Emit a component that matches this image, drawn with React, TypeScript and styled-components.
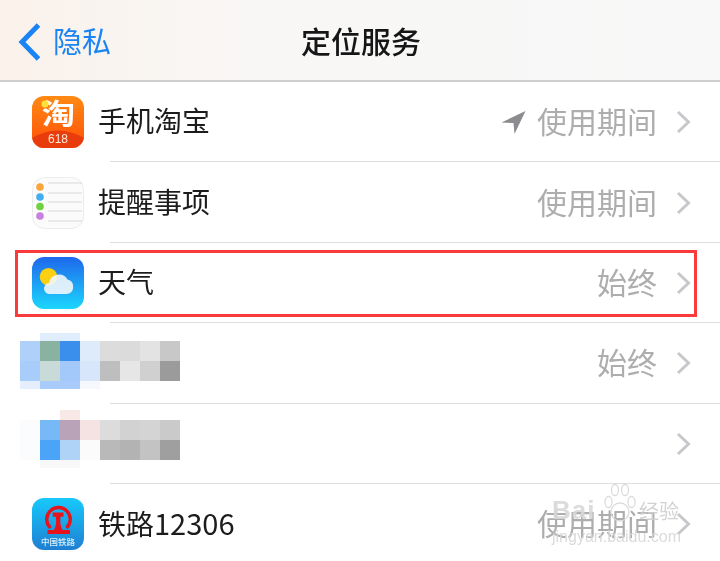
import React from 'react';
import styled, { createGlobalStyle } from 'styled-components';

const GlobalStyle = createGlobalStyle`
  html, body {
    margin: 0;
    padding: 0;
    background: #fff;
  }
  body {
    font-family: "Noto Sans CJK SC", "Liberation Sans", sans-serif;
  }
`;

const SPage = styled.div`
  position: relative;
  width: 720px;
  height: 561px;
  overflow: hidden;
  background: #fff;
  filter: blur(0.45px);
`;

const SNavBar = styled.header`
  box-sizing: border-box;
  display: flex;
  align-items: center;
  height: 82px;
  padding-left: 18px;
  background: linear-gradient(90deg, #fbf1ea 0%, #f9f4f0 15%, #f8f7f6 40%, #f8f8f8 100%);
  border-bottom: 2px solid #cfcfcf;
`;

const SBack = styled.div`
  display: flex;
  align-items: center;
  gap: 11px;
  width: 283px;
`;

const SBackIcon = styled.svg`
  display: block;
  margin-top: 3px;
`;

const SBackLabel = styled.span`
  font-size: 29px;
  line-height: 40px;
  color: #1a84f5;
`;

const STitle = styled.h1`
  margin: 0;
  font-size: 30px;
  line-height: 40px;
  font-weight: 500;
  color: #161616;
`;

const SList = styled.div`
  display: flex;
  flex-direction: column;
`;

const SRow = styled.div`
  position: relative;
  box-sizing: border-box;
  flex: none;
  display: flex;
  align-items: center;
  height: 80.4px;
  padding: 0 29px 0 32px;

  &:not(:last-child)::after {
    content: '';
    position: absolute;
    left: 110px;
    right: 0;
    bottom: 0;
    height: 1px;
    background: #dedede;
  }
`;

const SMosaicRow = styled(SRow)`
  padding-left: 20px;
`;

const SIconBox = styled.div`
  flex: none;
  width: 52px;
  height: 52px;
  margin-right: 14px;
  svg {
    display: block;
  }
`;

const SLabel = styled.span`
  font-size: 28px;
  line-height: 40px;
  margin-bottom: 4px;
  color: #1c1c1c;
`;

const SDigits = styled.span`
  font-size: 29px;
`;

const SRight = styled.div`
  margin-left: auto;
  display: flex;
  align-items: center;
`;

const SValue = styled.span`
  font-size: 30px;
  line-height: 40px;
  margin-bottom: 4px;
  color: #adadad;
  margin-right: 19px;
`;

const SArrowIcon = styled.svg`
  display: block;
  margin-right: 11px;
`;

const SChevron = styled.svg`
  display: block;
`;

const SMosaic = styled.div<{ $rows: string; $lift: number }>`
  display: grid;
  grid-template-columns: repeat(8, 20px);
  grid-template-rows: ${(props) => props.$rows};
  margin-bottom: ${(props) => props.$lift}px;
`;

const SCell = styled.div<{ $color: string }>`
  background: ${(props) => props.$color};
`;

const SHighlight = styled.div`
  position: absolute;
  left: 15px;
  top: 250px;
  width: 682px;
  height: 67px;
  box-sizing: border-box;
  border: 3px solid #fb3a3c;
`;

const SWatermark = styled.div`
  position: absolute;
  left: 552px;
  top: 483px;
  width: 130px;
  display: flex;
  flex-direction: column;
  color: rgba(215, 215, 215, 0.9);
`;

const SWatermarkTop = styled.div`
  display: flex;
  align-items: flex-end;
  height: 46px;
`;

const SWatermarkPaw = styled.svg`
  display: block;
  align-self: flex-start;
`;

const SWatermarkBrand = styled.span`
  width: 52px;
  font-family: "Liberation Sans", sans-serif;
  font-size: 26px;
  line-height: 30px;
  font-weight: 700;
  letter-spacing: 1px;
  margin-bottom: 4px;
`;

const SWatermarkCn = styled.span`
  margin-left: 3px;
  font-size: 20px;
  line-height: 24px;
  margin-bottom: 6px;
  color: rgba(205, 205, 205, 0.9);
`;

const SWatermarkUrl = styled.span`
  font-family: "Liberation Sans", sans-serif;
  font-size: 16px;
  line-height: 16px;
  white-space: nowrap;
`;

const Chevron = () => (
  <SChevron width="15" height="24" viewBox="0 0 15 24">
    <path d="M2 2 L12.5 12 L2 22" fill="none" stroke="#c8c8cc" strokeWidth="3" />
  </SChevron>
);

const LocationArrow = () => (
  <SArrowIcon width="25" height="25" viewBox="0 0 25 25">
    <path d="M24.5 1 L13.5 24 L12.5 13 L0.5 12.5 Z" fill="#8b8b90" />
  </SArrowIcon>
);

const BackChevron = () => (
  <SBackIcon width="24" height="38" viewBox="0 0 24 38">
    <path d="M20.5 2 L4 19 L20.5 36" fill="none" stroke="#1a84f5" strokeWidth="5" />
  </SBackIcon>
);

const TaobaoIcon = () => (
  <svg width="52" height="52" viewBox="0 0 52 52">
    <defs>
      <linearGradient id="tb" x1="0" y1="0" x2="0" y2="1">
        <stop offset="0" stopColor="#ff8a14" />
        <stop offset="1" stopColor="#ff4f06" />
      </linearGradient>
    </defs>
    <rect width="52" height="52" rx="12" fill="url(#tb)" />
    <path d="M0 42 Q26 27 52 42 V40 A12 12 0 0 1 40 52 H12 A12 12 0 0 1 0 40 Z" fill="#e83c0c" />
    <text transform="translate(26.5 29) scale(1.15 1)" textAnchor="middle" fontSize="29" fontWeight="700" fill="#fff" fontFamily="Noto Sans CJK SC">淘</text>
    <circle cx="13" cy="8" r="3.5" fill="#ffe13a" />
    <text x="26" y="46.5" textAnchor="middle" fontSize="12" fill="#ffe8d8" fontFamily="Liberation Sans">618</text>
  </svg>
);

const RemindersIcon = () => (
  <svg width="52" height="52" viewBox="0 0 52 52">
    <rect x="0.5" y="0.5" width="51" height="51" rx="12" fill="#fbfbfb" stroke="#ececec" />
    {[6, 16, 25, 34, 44].map((y) => (
      <path key={y} d="M16 0 H50" transform={`translate(0 ${y})`} stroke="#d8d8d8" strokeWidth="1" />
    ))}
    <circle cx="8" cy="10" r="3.8" fill="#f9a53a" />
    <circle cx="8" cy="20" r="3.8" fill="#42aef2" />
    <circle cx="8" cy="29.5" r="3.8" fill="#6fd13e" />
    <circle cx="8" cy="39" r="3.8" fill="#c77fe0" />
  </svg>
);

const WeatherIcon = () => (
  <svg width="52" height="52" viewBox="0 0 52 52">
    <defs>
      <linearGradient id="wx" x1="0" y1="0" x2="0" y2="1">
        <stop offset="0" stopColor="#1f68ec" />
        <stop offset="1" stopColor="#1bd6fd" />
      </linearGradient>
    </defs>
    <rect width="52" height="52" rx="12" fill="url(#wx)" />
    <circle cx="16.5" cy="19.7" r="8.8" fill="#fbcf12" />
    <path
      d="M18 37 A5.5 5.5 0 0 1 17 26 A10 10 0 0 1 35.5 22.5 A7.4 7.4 0 0 1 35 37 Z"
      fill="#f2f6fb"
      fillOpacity="0.9"
    />
  </svg>
);

const RailwayIcon = () => (
  <svg width="52" height="52" viewBox="0 0 52 52">
    <defs>
      <linearGradient id="rw" x1="0" y1="0" x2="0" y2="1">
        <stop offset="0" stopColor="#17c9fb" />
        <stop offset="1" stopColor="#1f7fd2" />
      </linearGradient>
    </defs>
    <rect width="52" height="52" rx="12" fill="url(#rw)" />
    <path d="M18.5 30 A11.8 11.8 0 1 1 34.5 30" fill="none" stroke="#e8141c" strokeWidth="3.4" />
    <path d="M20.7 14.5 H31.5 V18.7 H28.5 Q27.5 27 30.5 32 H38 V36 H15.5 V32 H22 Q25 27 23.8 18.7 H20.7 Z" fill="#e8141c" />
    <text x="26" y="46.5" textAnchor="middle" fontSize="8.5" fontWeight="500" fill="#d4eefc" fontFamily="Noto Sans CJK SC">中国铁路</text>
  </svg>
);

const MOSAIC_ONE = [
  '#ffffff', '#e0edfc', '#e0edfc', '#ffffff', '#ffffff', '#ffffff', '#ffffff', '#ffffff',
  '#aed0f9', '#89b2a1', '#3a8fec', '#deebfb', '#dcdcdc', '#dbdbdb', '#e3e3e3', '#c8c8c8',
  '#a9cdfa', '#c9dbd9', '#a3c9fa', '#d7e6fa', '#bebebe', '#e6e6e6', '#d0d0d0', '#9b9b9b',
  '#e4eefc', '#a8cbfb', '#a8cbfb', '#f5f9fe', '#ffffff', '#ffffff', '#ffffff', '#ffffff',
];

const MOSAIC_TWO = [
  '#ffffff', '#ffffff', '#f8e8e6', '#ffffff', '#ffffff', '#ffffff', '#ffffff', '#ffffff',
  '#fbfcfd', '#77b8f6', '#b9a3b8', '#f5e2e3', '#dcdcdc', '#d2d2d2', '#d4d4d4', '#cacaca',
  '#fbfcfd', '#4ba4f8', '#aed3f6', '#fbfbfb', '#b9b9b9', '#b3b3b3', '#c3c3c3', '#9f9f9f',
  '#ffffff', '#f8f8f8', '#f8f8f8', '#ffffff', '#ffffff', '#ffffff', '#ffffff', '#ffffff',
];

const Mosaic: React.FC<{ cells: string[]; rows: string; lift: number }> = ({ cells, rows, lift }) => (
  <SMosaic $rows={rows} $lift={lift}>
    {cells.map((color, index) => (
      <SCell key={index} $color={color} />
    ))}
  </SMosaic>
);

interface RowProps {
  icon: React.ReactNode;
  label: React.ReactNode;
  value?: string;
  located?: boolean;
}

const AppRow: React.FC<RowProps> = ({ icon, label, value, located }) => (
  <SRow>
    <SIconBox>{icon}</SIconBox>
    <SLabel>{label}</SLabel>
    <SRight>
      {located ? <LocationArrow /> : null}
      <SValue>{value}</SValue>
      <Chevron />
    </SRight>
  </SRow>
);

const App: React.FC = () => (
  <SPage>
    <GlobalStyle />
    <SNavBar>
      <SBack>
        <BackChevron />
        <SBackLabel>隐私</SBackLabel>
      </SBack>
      <STitle>定位服务</STitle>
    </SNavBar>
    <SList>
      <AppRow icon={<TaobaoIcon />} label="手机淘宝" value="使用期间" located />
      <AppRow icon={<RemindersIcon />} label="提醒事项" value="使用期间" />
      <AppRow icon={<WeatherIcon />} label="天气" value="始终" />
      <SMosaicRow>
        <Mosaic cells={MOSAIC_ONE} rows="8px 20px 20px 8px" lift={5} />
        <SRight>
          <SValue>始终</SValue>
          <Chevron />
        </SRight>
      </SMosaicRow>
      <SMosaicRow>
        <Mosaic cells={MOSAIC_TWO} rows="10px 20px 20px 8px" lift={9} />
        <SRight>
          <Chevron />
        </SRight>
      </SMosaicRow>
      <AppRow
        icon={<RailwayIcon />}
        label={
          <>
            铁路<SDigits>12306</SDigits>
          </>
        }
        value="使用期间"
      />
    </SList>
    <SHighlight />
    <SWatermark>
      <SWatermarkTop>
        <SWatermarkBrand>Bai</SWatermarkBrand>
        <SWatermarkPaw width="32" height="42" viewBox="0 0 32 42">
          <g fill="none" stroke="currentColor" strokeWidth="1.3">
            <ellipse cx="16" cy="29" rx="9" ry="9" />
            <ellipse cx="4.5" cy="19" rx="3.5" ry="5.5" />
            <ellipse cx="11" cy="7" rx="3.5" ry="5.5" />
            <ellipse cx="21" cy="7" rx="3.5" ry="5.5" />
            <ellipse cx="27.5" cy="19" rx="3.5" ry="5.5" />
          </g>
        </SWatermarkPaw>
        <SWatermarkCn>经验</SWatermarkCn>
      </SWatermarkTop>
      <SWatermarkUrl>jingyan.baidu.com</SWatermarkUrl>
    </SWatermark>
  </SPage>
);

export default App;
